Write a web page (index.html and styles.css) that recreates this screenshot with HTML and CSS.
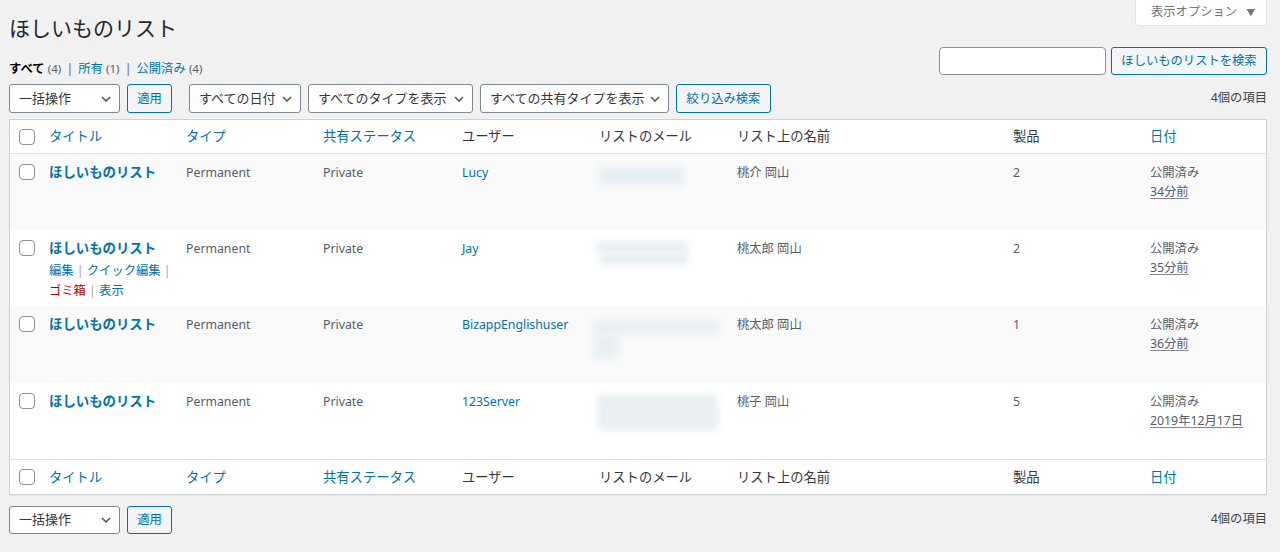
FILE: index.html
```html
<!DOCTYPE html>
<html lang="ja">
<head>
<meta charset="utf-8">
<title>ほしいものリスト</title>
<link rel="stylesheet" href="styles.css">
</head>
<body>
<div class="wrap">
  <div class="top-row">
    <h1 class="page-title">ほしいものリスト</h1>
    <div class="screen-options">表示オプション <span class="tri">▼</span></div>
  </div>
  <div class="sub-row">
    <ul class="subsubsub">
      <li><b class="current">すべて</b> <span class="count">(4)</span> <span class="sep">|</span></li>
      <li><a href="#">所有</a> <span class="count">(1)</span> <span class="sep">|</span></li>
      <li><a href="#">公開済み</a> <span class="count">(4)</span></li>
    </ul>
    <div class="search-box">
      <input class="search-input" type="text">
      <button class="btn">ほしいものリストを検索</button>
    </div>
  </div>

  <div class="tablenav top">
    <div class="actions">
      <div class="select w-bulk"><span>一括操作</span><svg class="chev" viewBox="0 0 10 6"><path d="M1 1l4 4 4-4"/></svg></div>
      <button class="btn small">適用</button>
    </div>
    <div class="actions filters">
      <div class="select w-date"><span>すべての日付</span><svg class="chev" viewBox="0 0 10 6"><path d="M1 1l4 4 4-4"/></svg></div>
      <div class="select w-type"><span>すべてのタイプを表示</span><svg class="chev" viewBox="0 0 10 6"><path d="M1 1l4 4 4-4"/></svg></div>
      <div class="select w-share"><span>すべての共有タイプを表示</span><svg class="chev" viewBox="0 0 10 6"><path d="M1 1l4 4 4-4"/></svg></div>
      <button class="btn filter">絞り込み検索</button>
    </div>
    <div class="num-items">4個の項目</div>
  </div>

  <table class="list">
    <colgroup>
      <col class="c-cb"><col class="c-title"><col class="c-type"><col class="c-status"><col class="c-user"><col class="c-email"><col class="c-name"><col class="c-prod"><col class="c-date">
    </colgroup>
    <thead>
      <tr>
        <th class="cb"><span class="checkbox"></span></th>
        <th><a href="#">タイトル</a></th>
        <th><a href="#">タイプ</a></th>
        <th><a href="#">共有ステータス</a></th>
        <th>ユーザー</th>
        <th>リストのメール</th>
        <th>リスト上の名前</th>
        <th>製品</th>
        <th><a href="#">日付</a></th>
      </tr>
    </thead>
    <tbody>
      <tr class="alt">
        <td class="cb"><span class="checkbox"></span></td>
        <td><a class="row-title" href="#">ほしいものリスト</a></td>
        <td>Permanent</td>
        <td>Private</td>
        <td><a href="#">Lucy</a></td>
        <td><div class="blur b1"></div></td>
        <td>桃介 岡山</td>
        <td>2</td>
        <td>公開済み<br><span class="abbr">34分前</span></td>
      </tr>
      <tr>
        <td class="cb"><span class="checkbox"></span></td>
        <td>
          <a class="row-title" href="#">ほしいものリスト</a>
          <div class="row-actions">
            <div><a href="#">編集</a> <span class="sep">|</span> <a href="#">クイック編集</a> <span class="sep">|</span></div>
            <div><a class="trash" href="#">ゴミ箱</a> <span class="sep">|</span> <a href="#">表示</a></div>
          </div>
        </td>
        <td>Permanent</td>
        <td>Private</td>
        <td><a href="#">Jay</a></td>
        <td><div class="blur b2"></div><div class="blur b2b"></div></td>
        <td>桃太郎 岡山</td>
        <td>2</td>
        <td>公開済み<br><span class="abbr">35分前</span></td>
      </tr>
      <tr class="alt tall">
        <td class="cb"><span class="checkbox"></span></td>
        <td><a class="row-title" href="#">ほしいものリスト</a></td>
        <td>Permanent</td>
        <td>Private</td>
        <td><a href="#">BizappEnglishuser</a></td>
        <td><div class="blur b3"></div><div class="blur b3b"></div></td>
        <td>桃太郎 岡山</td>
        <td>1</td>
        <td>公開済み<br><span class="abbr">36分前</span></td>
      </tr>
      <tr>
        <td class="cb"><span class="checkbox"></span></td>
        <td><a class="row-title" href="#">ほしいものリスト</a></td>
        <td>Permanent</td>
        <td>Private</td>
        <td><a href="#">123Server</a></td>
        <td><div class="blur b4"></div></td>
        <td>桃子 岡山</td>
        <td>5</td>
        <td>公開済み<br><span class="abbr">2019年12月17日</span></td>
      </tr>
    </tbody>
    <tfoot>
      <tr>
        <th class="cb"><span class="checkbox"></span></th>
        <th><a href="#">タイトル</a></th>
        <th><a href="#">タイプ</a></th>
        <th><a href="#">共有ステータス</a></th>
        <th>ユーザー</th>
        <th>リストのメール</th>
        <th>リスト上の名前</th>
        <th>製品</th>
        <th><a href="#">日付</a></th>
      </tr>
    </tfoot>
  </table>

  <div class="tablenav bottom">
    <div class="actions">
      <div class="select w-bulk"><span>一括操作</span><svg class="chev" viewBox="0 0 10 6"><path d="M1 1l4 4 4-4"/></svg></div>
      <button class="btn small">適用</button>
    </div>
    <div class="num-items">4個の項目</div>
  </div>
</div>
</body>
</html>
```

FILE: styles.css
```css
* { box-sizing: border-box; }

html, body {
  margin: 0;
  padding: 0;
  background: #f1f1f1;
}

body {
  font-family: "Noto Sans", "Noto Sans CJK JP", sans-serif;
  color: #3c434a;
  font-size: 12.3px;
  line-height: 1.5;
}

a {
  color: #0073aa;
  text-decoration: none;
}

.wrap {
  padding: 0 13px 0 9px;
}

/* top */
.top-row {
  display: flex;
  justify-content: space-between;
  align-items: flex-start;
}

.page-title {
  margin: 0;
  padding-top: 14px;
  font-size: 21px;
  font-weight: 400;
  line-height: 28px;
  color: #23282d;
}

.screen-options {
  margin-top: -1px;
  width: 132px;
  height: 27px;
  background: #fff;
  border: 1px solid #e2e4e7;
  border-top: none;
  border-radius: 0 0 4px 4px;
  color: #72777c;
  font-size: 12.3px;
  line-height: 26px;
  padding-left: 15px;
}

.screen-options .tri {
  font-size: 9px;
  margin-left: 6px;
  color: #72777c;
}

.sub-row {
  display: flex;
  justify-content: space-between;
  align-items: flex-end;
  margin-top: 5px;
}

.subsubsub {
  list-style: none;
  margin: 0 0 -2px 0;
  padding: 0;
  display: flex;
  font-size: 12.3px;
  line-height: 16px;
  color: #646970;
}

.subsubsub li {
  margin-right: 5px;
}

.subsubsub .current {
  color: #000;
  font-weight: 700;
}

.subsubsub .count {
  color: #555d66;
  font-size: 11.5px;
}

.subsubsub .sep {
  color: #646970;
  margin-left: 2px;
}

.search-box {
  display: flex;
  gap: 5px;
}

.search-input {
  width: 167px;
  height: 28px;
  border: 1px solid #8c8f94;
  border-radius: 4px;
  background: #fff;
  margin: 0;
}

.btn {
  height: 28px;
  padding: 0 10px;
  border: 1px solid #0071a1;
  border-radius: 3px;
  background: #f3f5f6;
  color: #0071a1;
  font-family: "Noto Sans", "Noto Sans CJK JP", sans-serif;
  font-size: 12.3px;
  line-height: 26px;
  margin: 0;
}

.search-box .btn {
  width: 156px;
  padding: 0;
}

/* tablenav */
.tablenav {
  display: flex;
  align-items: center;
  height: 29px;
  margin-top: 9px;
}

.actions {
  display: flex;
  align-items: center;
  gap: 7px;
}

.filters {
  margin-left: 17px;
}

.select {
  display: flex;
  align-items: center;
  justify-content: space-between;
  height: 29px;
  padding: 0 8px 0 9px;
  background: #fff;
  border: 1px solid #7e8993;
  border-radius: 3px;
  color: #32373c;
  font-size: 13px;
  line-height: 27px;
  white-space: nowrap;
}

.chev {
  width: 10px;
  height: 6px;
  flex: none;
}

.chev path {
  fill: none;
  stroke: #555;
  stroke-width: 1.6;
}

.w-bulk { width: 111px; }
.w-date { width: 112px; }
.w-type { width: 165px; }
.w-share { width: 189px; }

.btn.small {
  width: 45px;
  height: 29px;
  padding: 0;
}

.btn.filter {
  width: 95px;
  height: 29px;
  padding: 0;
}

.num-items {
  margin-left: auto;
  color: #3c434a;
  font-size: 12.3px;
}

/* table */
.list {
  width: 100%;
  margin-top: 6px;
  border: 1px solid #ccd0d4;
  border-spacing: 0;
  background: #fff;
  table-layout: fixed;
  box-shadow: 0 1px 1px rgba(0, 0, 0, 0.04);
}

.c-cb { width: 31px; }
.c-title { width: 137px; }
.c-type { width: 137px; }
.c-status { width: 139px; }
.c-user { width: 137px; }
.c-email { width: 138px; }
.c-name { width: 276px; }
.c-prod { width: 137px; }
.c-date { width: 124px; }

.list th {
  height: 34px;
  padding: 0 8px;
  text-align: left;
  font-weight: 400;
  font-size: 13.3px;
  color: #32373c;
  vertical-align: middle;
  white-space: nowrap;
}

.list thead th {
  border-bottom: 1px solid #e1e1e1;
}

.list tfoot th {
  height: 35px;
  border-top: 1px solid #e1e1e1;
  padding-top: 1px;
}

.list tbody tr {
  height: 76px;
}

.list tbody tr.tall {
  height: 77px;
}

.list tbody tr.alt {
  background: #f9f9f9;
}

.list td {
  padding: 9px 8px 3px;
  vertical-align: top;
  color: #555d66;
  font-size: 12.3px;
  line-height: 19px;
}

.list .cb {
  padding: 0 0 0 9px;
}

.list td.cb {
  padding-top: 10px;
}

.list th.cb {
  vertical-align: middle;
}

.checkbox {
  display: block;
  width: 16px;
  height: 16px;
  border: 1px solid #8c8f94;
  border-radius: 4px;
  background: #fff;
}

.row-title {
  font-weight: 700;
  font-size: 13.4px;
  color: #0073aa;
  white-space: nowrap;
}

.row-actions {
  margin-top: 3px;
  line-height: 20px;
  white-space: nowrap;
  color: #a0a5aa;
}

.row-actions .sep {
  color: #a0a5aa;
}

.row-actions .trash {
  color: #a00;
}

.abbr {
  text-decoration: underline;
  text-decoration-color: #888;
  text-underline-offset: 2px;
}

/* blurred e-mail placeholders */
.blur {
  background: #e8eef2;
  filter: blur(3.5px);
}

.b1 { width: 84px; height: 18px; margin-top: 4px; }
.b2 { width: 92px; height: 12px; margin-top: 2px; margin-left: -3px; }
.b2b { width: 88px; height: 12px; margin-left: 1px; }
.b3 { width: 124px; height: 14px; margin-top: 5px; margin-left: -5px; }
.b3b { width: 24px; height: 24px; margin-left: -5px; }
.b4 { width: 121px; height: 35px; margin-top: 3px; margin-left: -2px; }

.tablenav.bottom {
  margin-top: 10px;
}

.tablenav.bottom .select,
.tablenav.bottom .btn.small {
  height: 28px;
}
```
